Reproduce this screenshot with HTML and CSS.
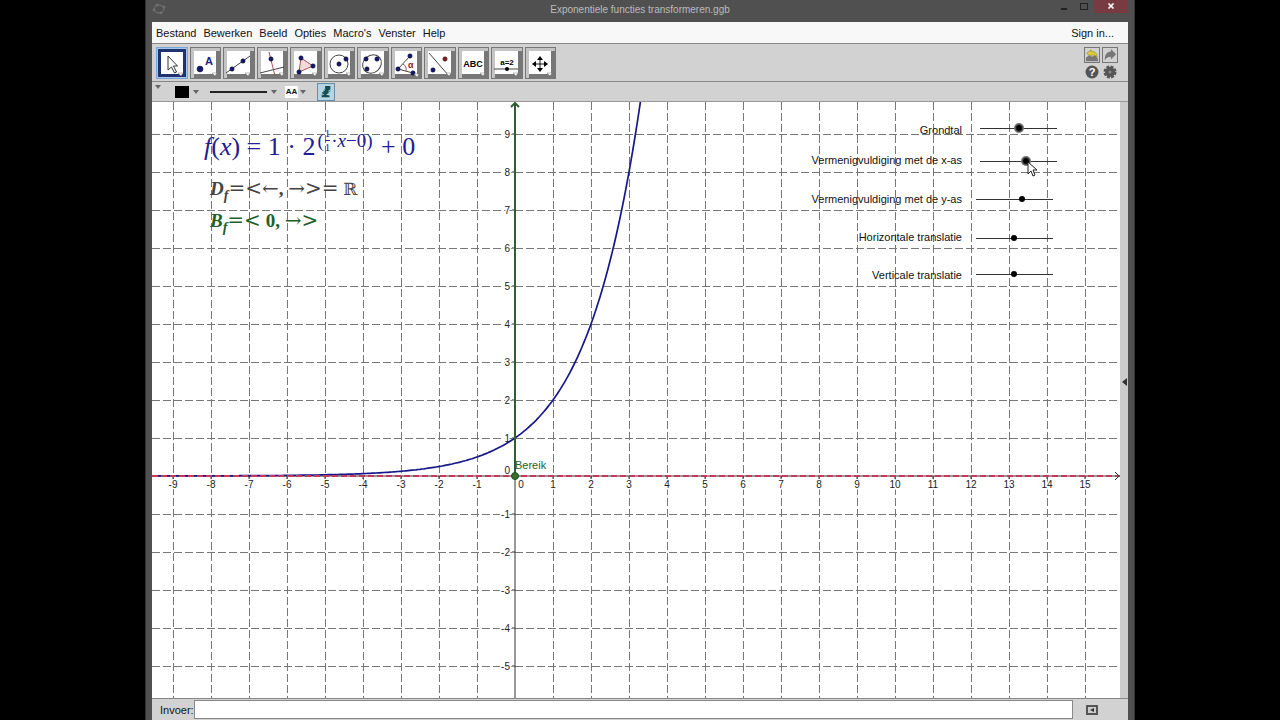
FILE: index.html
```
<!DOCTYPE html>
<html lang="nl">

<head>
  <meta charset="UTF-8">
  <title>Exponentiele functies transformeren.ggb</title>
  <link rel="stylesheet" href="styles.css">
</head>

<body>
  <div class="window">
    <header class="titlebar">
      <svg class="app-icon" viewBox="0 0 14 12"><ellipse cx="7" cy="6" rx="5" ry="4" /><circle cx="2" cy="7" r="1" /><circle cx="5" cy="2" r="1" /><circle cx="12" cy="4" r="1" /><circle cx="9" cy="10" r="1" /></svg>
      <span class="title">Exponentiele functies transformeren.ggb</span>
      <div class="window-buttons">
        <button class="win-btn" aria-label="Minimaliseren"><svg viewBox="0 0 20 14"><path d="M7 9h6" stroke-width="2" /></svg></button>
        <button class="win-btn" aria-label="Maximaliseren"><svg viewBox="0 0 20 14"><rect x="6.500" y="3.500" width="7" height="6" /></svg></button>
        <button class="win-btn close" aria-label="Sluiten"><svg viewBox="0 0 20 14"><path d="M7.500 3.500l5 5m0-5l-5 5" stroke-width="1.700" /></svg></button>
      </div>
    </header>

    <nav class="menu">
      <a href="#">Bestand</a>
      <a href="#">Bewerken</a>
      <a href="#">Beeld</a>
      <a href="#">Opties</a>
      <a href="#">Macro's</a>
      <a href="#">Venster</a>
      <a href="#">Help</a>
      <a class="sign-in" href="#">Sign in...</a>
    </nav>

    <div class="toolbar">
      <div class="tools">
        <button class="tool selected" aria-label="Verplaatsen"><svg viewBox="0 0 26 26"><path class="pointer" d="M10 5v14l3.500-3 3 6 2-1-3-6h4z" /><path class="corner" d="M20 22h5l-2 3z" /></svg></button>
        <button class="tool" aria-label="Punt"><svg viewBox="0 0 26 26"><circle class="dot" cx="8" cy="18" r="3" /><path class="corner" d="M20 22h5l-2 3z" /><text class="blue" x="13" y="14" font-size="11">A</text></svg></button>
        <button class="tool" aria-label="Rechte"><svg viewBox="0 0 26 26"><path class="line" d="M1 22L25 5" /><circle class="dot" cx="7" cy="18" r="2.200" /><circle class="dot" cx="18" cy="10" r="2.200" /><path class="corner" d="M20 22h5l-2 3z" /></svg></button>
        <button class="tool" aria-label="Loodlijn"><svg viewBox="0 0 26 26"><path class="line" d="M1 22L25 16" /><path class="line red" d="M10 1l6 24" /><circle class="dot" cx="12" cy="8" r="2.200" /><path class="corner" d="M20 22h5l-2 3z" /></svg></button>
        <button class="tool" aria-label="Veelhoek"><svg viewBox="0 0 26 26"><path class="area" d="M9 7l12 8-14 6z" /><circle class="dot" cx="9" cy="7" r="2.200" /><circle class="dot" cx="21" cy="15" r="2.200" /><circle class="dot" cx="7" cy="21" r="2.200" /><path class="corner" d="M20 22h5l-2 3z" /></svg></button>
        <button class="tool" aria-label="Cirkel"><svg viewBox="0 0 26 26"><circle class="line" cx="13" cy="13" r="9" /><circle class="dot" cx="13" cy="13" r="2.200" /><circle class="dot" cx="20" cy="8" r="2.200" /><path class="corner" d="M20 22h5l-2 3z" /></svg></button>
        <button class="tool" aria-label="Ellips"><svg viewBox="0 0 26 26"><ellipse class="line" cx="13" cy="13" rx="10" ry="8.500" transform="rotate(-40 13 13)" /><circle class="dot" cx="7" cy="8" r="2.200" /><circle class="dot" cx="18" cy="8" r="2.200" /><circle class="dot" cx="8" cy="18" r="2.200" /><path class="corner" d="M20 22h5l-2 3z" /></svg></button>
        <button class="tool" aria-label="Hoek"><svg viewBox="0 0 26 26"><path class="line" d="M17 5L5 18l15 4" /><path class="line red" d="M10 13q4 2 3 7" /><circle class="dot" cx="17" cy="5" r="2.200" /><circle class="dot" cx="5" cy="18" r="2.200" /><circle class="dot" cx="20" cy="22" r="2.200" /><text class="maroon" x="15" y="17" font-size="9">α</text><path class="corner" d="M21 23h5l-2 3z" /></svg></button>
        <button class="tool" aria-label="Spiegelen"><svg viewBox="0 0 26 26"><path class="line" d="M3 2l20 23" /><circle class="dot" cx="7" cy="19" r="2.200" /><circle class="dot red" cx="19" cy="8" r="2.200" /><path class="corner" d="M20 22h5l-2 3z" /></svg></button>
        <button class="tool" aria-label="Tekst"><svg viewBox="0 0 26 26"><text x="13" y="16" font-size="9" text-anchor="middle">ABC</text><path class="corner" d="M20 22h5l-2 3z" /></svg></button>
        <button class="tool" aria-label="Schuifknop"><svg viewBox="0 0 26 26"><text x="14" y="14" font-size="8" text-anchor="middle">a=2</text><path class="line" d="M1 18h24" /><circle cx="14" cy="18" r="2" /><path class="corner" d="M20 22h5l-2 3z" /></svg></button>
        <button class="tool" aria-label="Verschuif tekenvenster"><svg viewBox="0 0 26 26"><path class="line black" d="M7 13h12M13 7v12" /><path d="M13 5l3 4h-6zM13 21l3-4h-6zM5 13l4-3v6zM21 13l-4-3v6z" /><path class="corner" d="M20 22h5l-2 3z" /></svg></button>
      </div>
      <div class="actions">
        <button class="action framed" aria-label="Ongedaan maken"><svg viewBox="0 0 16 16"><path fill="#777" d="M1 11l4-3 3 2 4-2 3 5v2H1z" /><path fill="#e0ca35" stroke="#756a25" stroke-width=".500" d="M2 6l5-4v2c5 0 7 2 7 7-2-3-4-3-7-3v2z" /></svg></button>
        <button class="action framed" aria-label="Opnieuw"><svg viewBox="0 0 16 16"><path fill="#777" d="M15 7L9 1v3C4 4 2 8 2 14c2-3 4-4 7-4v3z" /></svg></button>
        <button class="action" aria-label="Hulp"><svg viewBox="0 0 16 16"><circle cx="8" cy="8" r="6.500" fill="#555" /><text x="8" y="12" font-size="11" font-weight="bold" text-anchor="middle" fill="#fff">?</text></svg></button>
        <button class="action" aria-label="Instellingen"><svg viewBox="0 0 16 16"><circle cx="8" cy="8" r="5" fill="#555" /><circle cx="8" cy="8" r="5.500" fill="none" stroke="#555" stroke-width="2" stroke-dasharray="3 1.300" /><circle cx="8" cy="8" r="1.500" fill="#888" /></svg></button>
      </div>
    </div>

    <div class="stylebar">
      <button class="arrow first" aria-label="Stijlbalk"></button>
      <button class="swatch" aria-label="Kleur"></button>
      <button class="arrow" aria-label="Kleur kiezen"></button>
      <button class="line-style" aria-label="Lijnstijl"></button>
      <button class="arrow" aria-label="Lijnstijl kiezen"></button>
      <button class="text-size">AA</button>
      <button class="arrow" aria-label="Tekstgrootte kiezen"></button>
      <button class="snap" aria-label="Punten vastzetten"><svg viewBox="0 0 16 16"><path d="M7 1h6v4l-2 1v3l-3 2 4 1v2H3v-2l3-1-3-2 4-3z" fill="#174b50" /><path d="M3 12l4-8M10 10l3-4" stroke="#438c90" fill="none" /></svg></button>
    </div>

    <main class="workspace">
      <div class="graph">
        <svg class="plot" id="plot"></svg>

        <div class="formula function"><i>f</i>(<i>x</i>) = 1 · 2<span class="power">(<span class="fraction"><span>1</span><span>1</span></span>·<i>x</i>−0)</span> + 0</div>
        <div class="formula domain"><i>D<sub>f</sub></i><span class="symbols">=&lt;←</span>, <span class="symbols">→&gt;=</span> <span class="symbols real">ℝ</span></div>
        <div class="formula range"><i>B<sub>f</sub></i><span class="symbols">=&lt;</span> 0, <span class="symbols">→&gt;</span></div>

        <label class="slider-label base" for="base">Grondtal</label>
        <input class="slider base active" id="base" type="range" min="0" max="100" value="50">
        <label class="slider-label x-scale" for="x-scale">Vermenigvuldiging met de x-as</label>
        <input class="slider x-scale active" id="x-scale" type="range" min="0" max="100" value="61">
        <label class="slider-label y-scale" for="y-scale">Vermenigvuldiging met de y-as</label>
        <input class="slider y-scale" id="y-scale" type="range" min="0" max="100" value="60">
        <label class="slider-label x-shift" for="x-shift">Horizontale translatie</label>
        <input class="slider x-shift" id="x-shift" type="range" min="0" max="100" value="49">
        <label class="slider-label y-shift" for="y-shift">Verticale translatie</label>
        <input class="slider y-shift" id="y-shift" type="range" min="0" max="100" value="49">
        <svg class="cursor" viewBox="0 0 12 16"><path d="M1 1v12l3-3 2 5 2-1-2-5h4z" /></svg>
      </div>
      <button class="side-panel" aria-label="Zijpaneel openen"></button>
    </main>

    <footer class="input-bar">
      <label for="command">Invoer:</label>
      <input class="command" id="command" type="text">
      <button class="input-help" aria-label="Invoerhulp"><svg viewBox="0 0 12 10"><rect x="1" y="1" width="10" height="8" fill="#ccc" stroke="#555" stroke-width="2" /><path d="M8 3v4L4 5z" fill="#333" /></svg></button>
    </footer>
  </div>
  <script src="plot.js"></script>
</body>

</html>
```
FILE: styles.css
```
* {
  box-sizing: border-box;
}

body {
  margin: 0;
  background: #000;
  color: #111;
  font-family: "Liberation Sans", Arial, sans-serif;
  font-size: 11px;
  overflow: hidden;
}

button {
  border: 0;
  padding: 0;
  background: none;
  color: inherit;
  font: inherit;
}

svg {
  display: block;
}

.window {
  display: flex;
  flex-direction: column;
  max-width: 990px;
  height: 100vh;
  margin: 0 auto;
  padding: 0 6px;
  background: #505050;
  border-left: 1px solid #303030;
  border-right: 1px solid #333;
}

.titlebar {
  display: flex;
  justify-content: space-between;
  height: 22px;
}

.app-icon {
  width: 14px;
  height: 12px;
  margin-top: 3px;
  fill: none;
  stroke: #777;
}

.title {
  padding: 4px 0 0 60px;
  color: #bbb;
  font-size: 10px;
  line-height: 12px;
}

.window-buttons {
  display: flex;
  height: 13px;
}

.win-btn {
  width: 20px;
}

.win-btn svg {
  width: 20px;
  height: 14px;
  margin: 0 auto;
  fill: none;
  stroke: #222;
}

.win-btn.close {
  width: 34px;
  background: #783b42;
}

.win-btn.close svg {
  stroke: #fff;
}

.menu {
  display: flex;
  align-items: center;
  gap: 7px;
  height: 21px;
  padding: 0 14px 0 4px;
  background: #f8f8f8;
}

.menu a {
  color: #111;
  text-decoration: none;
}

.menu .sign-in {
  margin-left: auto;
}

.toolbar {
  display: flex;
  justify-content: space-between;
  height: 39px;
  padding: 3px 10px 2px 4px;
  background: #d2d2d2;
  border-top: 1px solid #888;
  border-bottom: 1px solid #888;
}

.tools {
  display: grid;
  grid-template-columns: repeat(12, 1fr);
  gap: 2px;
  width: 400px;
  height: 32px;
}

.tool {
  padding: 1px 0 0 1px;
  border: 1px solid #777;
  background: #fff;
  box-shadow: inset 3px 3px #c4c4c4, inset -4px -4px #777;
}

.tool svg {
  width: 26px;
  height: 26px;
  font-weight: bold;
}

.tool.selected {
  border: 1px solid #7ca5d8;
  box-shadow: inset 0 0 0 1px #a8c7e8, inset 0 0 0 4px #20336f;
}

.pointer {
  fill: #fff;
  stroke: #333;
}

.dot {
  fill: #161675;
  stroke: #111;
  stroke-width: .5px;
}

.dot.red {
  fill: #912020;
}

.line {
  fill: none;
  stroke: #444;
}

.line.red {
  stroke: #a45353;
}

.line.black {
  stroke: #111;
}

.area {
  fill: #f4dada;
  stroke: #a85050;
}

.corner {
  fill: #fff;
  stroke: #777;
  stroke-width: .5px;
}

.blue {
  fill: #202080;
}

.maroon {
  fill: #912020;
}

.actions {
  display: grid;
  grid-template-columns: 16px 16px;
  grid-auto-rows: 16px;
  gap: 1px 2px;
}

.framed {
  border: 1px solid #777;
}

.action svg {
  width: 100%;
  height: 100%;
}

.stylebar {
  display: flex;
  align-items: center;
  height: 20px;
  padding-left: 3px;
  background: #d2d2d2;
  border-bottom: 1px solid #999;
}

.arrow {
  border: 3px solid transparent;
  border-top: 4px solid #666;
  border-bottom: 0;
}

.arrow.first {
  align-self: flex-start;
  margin: 3px 14px 0 0;
}

.swatch {
  width: 14px;
  height: 12px;
  margin-right: 4px;
  background: #000;
}

.line-style {
  width: 57px;
  height: 2px;
  margin: 0 4px 0 11px;
  background: #222;
}

.text-size {
  width: 13px;
  height: 12px;
  margin: 0 2px 0 8px;
  background: #fff;
  font-size: 8px;
  font-weight: bold;
}

.snap {
  width: 18px;
  height: 18px;
  margin-left: 11px;
  padding: 1px;
  border: 1px solid #638eab;
  background: #b5d5e5;
}

.snap svg {
  width: 14px;
  height: 14px;
}

.workspace {
  display: flex;
  flex: 1;
  min-height: 0;
}

.graph {
  position: relative;
  flex: 1;
  background: #fff;
  overflow: hidden;
}

.plot {
  width: 100%;
  height: 100%;
}

.grid {
  stroke: #777;
  stroke-dasharray: 8 3;
  shape-rendering: crispEdges;
}

.tick,
.axis {
  fill: none;
  stroke: #333;
}

.numbers {
  fill: #222;
  stroke: #fff;
  stroke-width: 3px;
  paint-order: stroke;
  font-size: 10px;
}

.domain-axis {
  stroke: #c8385b;
  stroke-width: 2px;
  stroke-dasharray: 6 3;
}

.range-axis {
  fill: none;
  stroke: #315d35;
  stroke-width: 2px;
}

.curve {
  fill: none;
  stroke: #18188a;
  stroke-width: 1.7px;
}

.origin {
  fill: #35702c;
  stroke: #234b20;
}

.range-name {
  fill: #226226;
  font-size: 11px;
}

/* formulas, labels and sliders lie freely on the drawing pad */
.formula {
  position: absolute;
  font-family: "Liberation Serif", "Times New Roman", serif;
  white-space: nowrap;
}

.function {
  left: 52px;
  top: 25px;
  color: #202091;
  font-size: 26px;
  line-height: 30px;
}

.power {
  display: inline-flex;
  align-items: center;
  margin: 0 2px;
  vertical-align: 8px;
  font-size: 19px;
  line-height: 18px;
}

.fraction {
  display: inline-flex;
  flex-direction: column;
  padding: 0 1px;
  font-size: 11px;
  line-height: 13px;
}

.fraction span + span {
  border-top: 1px solid;
}

.domain,
.range {
  left: 58px;
  font-size: 19px;
  font-weight: bold;
  line-height: 24px;
}

.domain {
  top: 75px;
  color: #444;
}

.range {
  top: 107px;
  color: #20602a;
}

.formula sub {
  font-size: 14px;
  line-height: 0;
}

.symbols {
  font-family: "DejaVu Serif", serif;
  font-size: 20px;
  font-weight: normal;
  line-height: 0;
}

.symbols.real {
  font-size: 17px;
}

.slider-label {
  position: absolute;
  left: 610px;
  width: 200px;
  line-height: 14px;
  text-align: right;
}

.slider {
  position: absolute;
  left: 824px;
  width: 77px;
  height: 12px;
  margin: 0;
  background: linear-gradient(#333, #333) center / 100% 1px no-repeat;
  appearance: none;
}

.slider::-webkit-slider-thumb {
  width: 6px;
  height: 6px;
  border-radius: 50%;
  background: #000;
  appearance: none;
}

.slider.active {
  left: 828px;
}

.slider.active::-webkit-slider-thumb {
  width: 8px;
  height: 8px;
  border: 1px solid #555;
  box-shadow: 0 0 0 1px #777;
}

.slider-label.base {
  top: 21px;
}

.slider.base {
  top: 20px;
}

.slider-label.x-scale {
  top: 51px;
}

.slider.x-scale {
  top: 53px;
}

.slider-label.y-scale {
  top: 90px;
}

.slider.y-scale {
  top: 91px;
}

.slider-label.x-shift {
  top: 128px;
}

.slider.x-shift {
  top: 130px;
}

.slider-label.y-shift {
  top: 166px;
}

.slider.y-shift {
  top: 166px;
}

.cursor {
  position: absolute;
  left: 875px;
  top: 59px;
  width: 12px;
  height: 16px;
  fill: #fff;
  stroke: #222;
}

.side-panel {
  display: flex;
  align-items: center;
  justify-content: center;
  width: 8px;
  padding-bottom: 36px;
  background: #ccc;
}

.side-panel::before {
  content: "";
  border: 4px solid transparent;
  border-right: 5px solid #333;
  border-left: 0;
}

.input-bar {
  display: flex;
  align-items: center;
  height: 22px;
  padding: 0 30px 0 8px;
  background: #d2d2d2;
  border-top: 1px solid #888;
}

.command {
  flex: 1;
  height: 19px;
  margin: 0 13px 0 0;
  border: 1px solid #888;
  background: #fff;
}

.input-help svg {
  width: 12px;
  height: 10px;
}
```
FILE: plot.js
```
var UNIT = 38;
var ORIGIN_X = 363;
var ORIGIN_Y = 374;

var plot = document.getElementById('plot');
var width = plot.clientWidth;
var height = plot.clientHeight;

function px(x) { return ORIGIN_X + x * UNIT; }
function py(y) { return ORIGIN_Y - y * UNIT; }

function line(cls, x1, y1, x2, y2) {
  return '<path class="' + cls + '" d="M' + x1 + ' ' + y1 + 'L' + x2 + ' ' + y2 + '"/>';
}

function number(value, x, y, anchor) {
  return '<text class="numbers" x="' + x + '" y="' + y + '" text-anchor="' + anchor + '">' + value + '</text>';
}

var grid = '';
var labels = '';
var x, y;

for (x = Math.ceil(-ORIGIN_X / UNIT); px(x) < width; x++) {
  if (x === 0) continue;
  grid += line('grid', px(x), 0, px(x), height);
  labels += number(x, px(x), ORIGIN_Y + 12, 'middle');
  labels += line('tick', px(x), ORIGIN_Y, px(x), ORIGIN_Y + 3);
}
for (y = Math.ceil((ORIGIN_Y - height) / UNIT); py(y) > 0; y++) {
  if (y === 0) continue;
  grid += line('grid', 0, py(y), width, py(y));
  labels += number(y, ORIGIN_X - 5, py(y) + 4, 'end');
  labels += line('tick', ORIGIN_X - 3, py(y), ORIGIN_X, py(y));
}
labels += number(0, ORIGIN_X + 6, ORIGIN_Y + 12, 'middle');
labels += number(0, ORIGIN_X - 5, ORIGIN_Y - 2, 'end');

// f(x) = 2^x
var points = [];
for (x = 0; x <= width; x += 2) {
  y = py(Math.pow(2, (x - ORIGIN_X) / UNIT));
  points.push(x + ',' + y.toFixed(1));
  if (y < 0) break;
}

plot.innerHTML = grid + labels +
  line('axis', 0, ORIGIN_Y, width, ORIGIN_Y) +
  line('axis', ORIGIN_X, ORIGIN_Y, ORIGIN_X, height) +
  '<polyline class="curve" points="' + points.join(' ') + '"/>' +
  line('domain-axis', 0, ORIGIN_Y, width, ORIGIN_Y) +
  '<path class="axis" d="M' + (width - 5) + ' ' + (ORIGIN_Y - 4) + 'l4 4l-4 4"/>' +
  line('range-axis', ORIGIN_X, ORIGIN_Y, ORIGIN_X, 1) +
  '<path class="range-axis" d="M' + (ORIGIN_X - 4) + ' 5l4-4l4 4"/>' +
  '<circle class="origin" cx="' + ORIGIN_X + '" cy="' + ORIGIN_Y + '" r="3.5"/>' +
  '<text class="range-name" x="' + ORIGIN_X + '" y="' + (ORIGIN_Y - 7) + '">Bereik</text>';
```
